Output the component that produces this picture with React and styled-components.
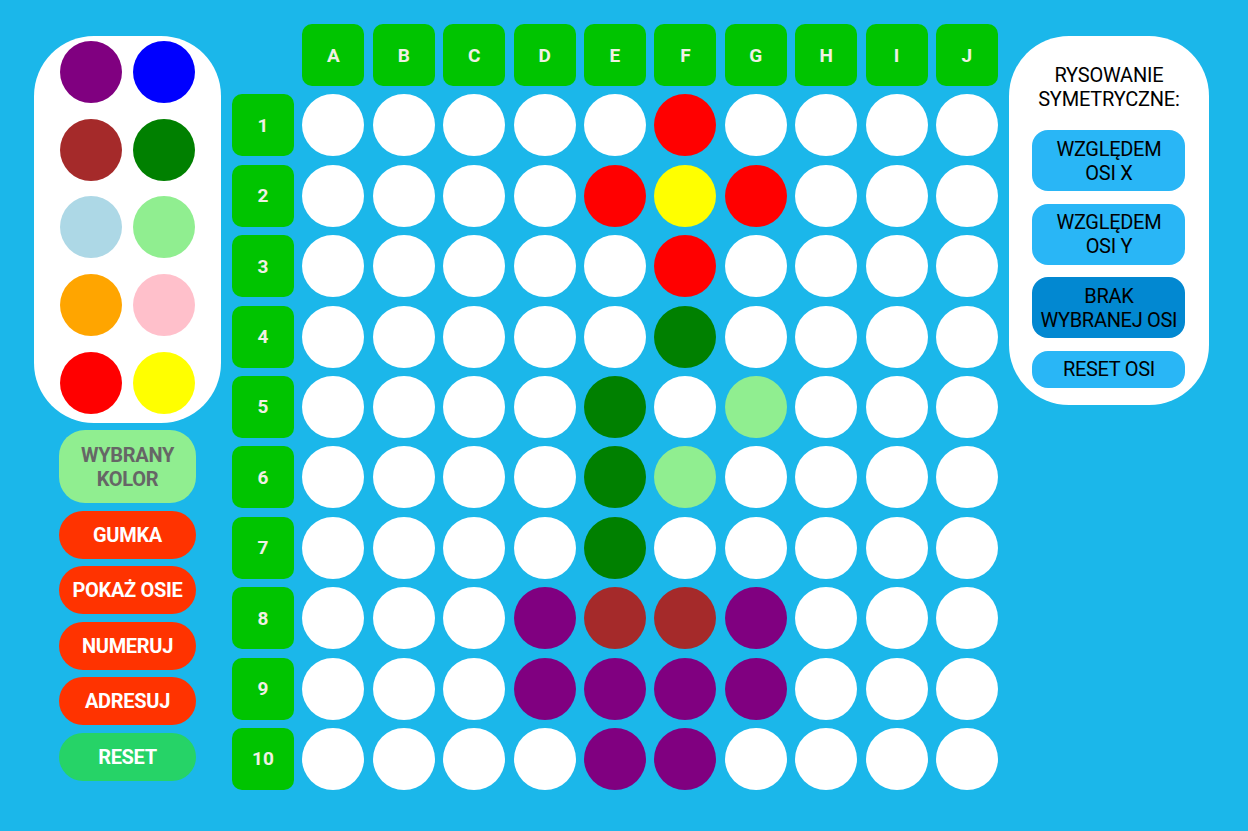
import React from "react";
import styled, { createGlobalStyle } from "styled-components";

const GlobalStyle = createGlobalStyle`
  html, body {
    margin: 0;
    padding: 0;
    background: #1bb7ea;
    font-family: Roboto, "Liberation Sans", sans-serif;
  }
`;

const Page = styled.div`
  display: flex;
  align-items: flex-start;
  padding: 24px 0 0 34px;
  height: 807px;
  gap: 11px;
`;

const LeftColumn = styled.div`
  display: flex;
  flex-direction: column;
  align-items: center;
  width: 187px;
  margin-top: 12px;
`;

const Palette = styled.div`
  box-sizing: border-box;
  width: 187px;
  height: 387px;
  background: #fff;
  border-radius: 60px;
  padding: 5px 26px 9px;
  display: grid;
  grid-template-columns: 62px 62px;
  column-gap: 11px;
  row-gap: 15.5px;
  justify-content: center;
`;

const Swatch = styled.div`
  width: 62px;
  height: 62px;
  border-radius: 50%;
  background: ${(p) => p.color};
`;

const ToolList = styled.div`
  display: flex;
  flex-direction: column;
  gap: 7.5px;
  margin-top: 7px;
`;

const ToolButton = styled.div`
  box-sizing: border-box;
  width: 137px;
  height: ${(p) => (p.tall ? "73px" : "48px")};
  border-radius: 26px;
  background: ${(p) => p.bg};
  color: ${(p) => p.fg || "#fff"};
  font-size: 20px;
  font-weight: 700;
  line-height: 24px;
  letter-spacing: -0.3px;
  display: flex;
  align-items: center;
  justify-content: center;
  text-align: center;
`;

const Board = styled.div`
  display: grid;
  grid-template-columns: repeat(11, 62px);
  grid-auto-rows: 62px;
  column-gap: 8.4px;
  row-gap: 8.4px;
`;

const Label = styled.div`
  background: #00c400;
  border-radius: 10px;
  color: #f0f0e4;
  font-size: 19px;
  font-weight: 700;
  display: flex;
  align-items: center;
  justify-content: center;
`;

const Corner = styled.div``;

const Cell = styled.div`
  border-radius: 50%;
  background: ${(p) => p.color || "#fff"};
`;

const SymPanel = styled.div`
  box-sizing: border-box;
  width: 200px;
  margin-top: 12px;
  background: #fff;
  border-radius: 60px;
  padding: 27px 0 17px;
  display: flex;
  flex-direction: column;
  align-items: center;
`;

const SymTitle = styled.div`
  font-size: 20px;
  line-height: 24px;
  letter-spacing: -0.2px;
  text-align: center;
  color: #000;
  margin-bottom: 19px;
`;

const SymList = styled.div`
  display: flex;
  flex-direction: column;
  gap: 12.5px;
`;

const SymButton = styled.div`
  box-sizing: border-box;
  width: 153px;
  padding: 6.5px 0;
  border-radius: 16px;
  background: ${(p) => (p.active ? "#0288d1" : "#29b6f6")};
  color: #000;
  font-size: 20px;
  line-height: 24px;
  letter-spacing: -0.3px;
  text-align: center;
`;

const palette = [
  "#800080", "#0000ff",
  "#a52a2a", "#008000",
  "#add8e6", "#90ee90",
  "#ffa500", "#ffc0cb",
  "#ff0000", "#ffff00",
];

const letters = ["A", "B", "C", "D", "E", "F", "G", "H", "I", "J"];

const P = "#800080";
const BR = "#a52a2a";
const G = "#008000";
const LG = "#90ee90";
const R = "#ff0000";
const Y = "#ffff00";

// painted cells: row -> { column index: colour }
const painted = {
  1: { 5: R },
  2: { 4: R, 5: Y, 6: R },
  3: { 5: R },
  4: { 5: G },
  5: { 4: G, 6: LG },
  6: { 4: G, 5: LG },
  7: { 4: G },
  8: { 3: P, 4: BR, 5: BR, 6: P },
  9: { 3: P, 4: P, 5: P, 6: P },
  10: { 4: P, 5: P },
};

function App() {
  const rows = [1, 2, 3, 4, 5, 6, 7, 8, 9, 10];
  return (
    <>
      <GlobalStyle />
      <Page>
        <LeftColumn>
          <Palette>
            {palette.map((c, i) => (
              <Swatch key={i} color={c} />
            ))}
          </Palette>
          <ToolList>
            <ToolButton tall bg="#90ee90" fg="#666">
              WYBRANY
              <br />
              KOLOR
            </ToolButton>
            <ToolButton bg="#ff3300">GUMKA</ToolButton>
            <ToolButton bg="#ff3300">POKAŻ OSIE</ToolButton>
            <ToolButton bg="#ff3300">NUMERUJ</ToolButton>
            <ToolButton bg="#ff3300">ADRESUJ</ToolButton>
            <ToolButton bg="#26d367">RESET</ToolButton>
          </ToolList>
        </LeftColumn>

        <Board>
          <Corner />
          {letters.map((l) => (
            <Label key={l}>{l}</Label>
          ))}
          {rows.map((r) => (
            <React.Fragment key={r}>
              <Label>{r}</Label>
              {letters.map((l, ci) => (
                <Cell key={l} color={painted[r][ci]} />
              ))}
            </React.Fragment>
          ))}
        </Board>

        <SymPanel>
          <SymTitle>
            RYSOWANIE
            <br />
            SYMETRYCZNE:
          </SymTitle>
          <SymList>
            <SymButton>
              WZGLĘDEM
              <br />
              OSI X
            </SymButton>
            <SymButton>
              WZGLĘDEM
              <br />
              OSI Y
            </SymButton>
            <SymButton active>
              BRAK
              <br />
              WYBRANEJ OSI
            </SymButton>
            <SymButton>RESET OSI</SymButton>
          </SymList>
        </SymPanel>
      </Page>
    </>
  );
}

export default App;
